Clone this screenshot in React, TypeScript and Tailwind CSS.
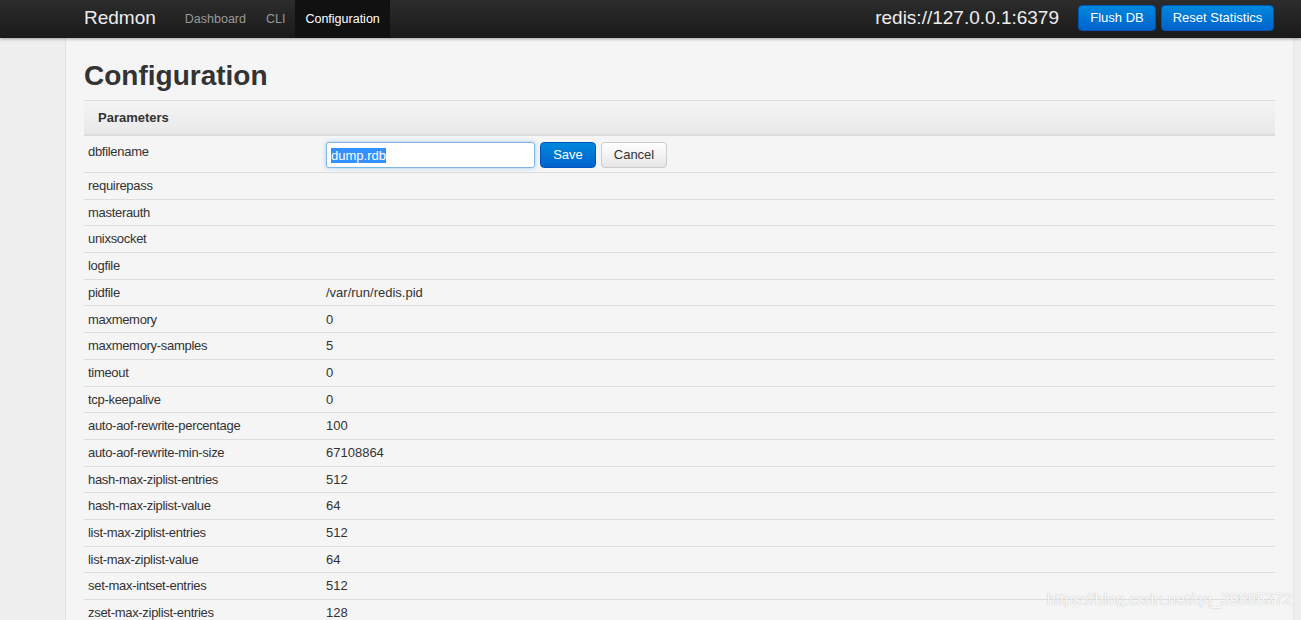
const rows: [string, string][] = [
  ["requirepass", ""],
  ["masterauth", ""],
  ["unixsocket", ""],
  ["logfile", ""],
  ["pidfile", "/var/run/redis.pid"],
  ["maxmemory", "0"],
  ["maxmemory-samples", "5"],
  ["timeout", "0"],
  ["tcp-keepalive", "0"],
  ["auto-aof-rewrite-percentage", "100"],
  ["auto-aof-rewrite-min-size", "67108864"],
  ["hash-max-ziplist-entries", "512"],
  ["hash-max-ziplist-value", "64"],
  ["list-max-ziplist-entries", "512"],
  ["list-max-ziplist-value", "64"],
  ["set-max-intset-entries", "512"],
  ["zset-max-ziplist-entries", "128"],
  ["zset-max-ziplist-value", "64"],
];

function NavBar() {
  return (
    <div className="h-[38px] bg-gradient-to-b from-[#2c2c2c] to-[#1a1a1a] flex items-center shadow-[0_1px_3px_rgba(0,0,0,0.35)] relative z-10">
      <div className="w-[84px]" />
      <div className="text-[19px] text-[#eeeeee] mr-[19px] -mt-[1px]">Redmon</div>
      <div className="flex h-full text-[12.5px]">
        <div className="px-[10px] flex items-center text-[#999999]">Dashboard</div>
        <div className="px-[10px] flex items-center text-[#999999]">CLI</div>
        <div className="px-[10px] flex items-center text-white bg-[#111111]">Configuration</div>
      </div>
      <div className="flex-1" />
      <div className="text-[19px] text-[#eeeeee] mr-[19px] -mt-[1px]">redis://127.0.0.1:6379</div>
      <div className="flex gap-[5px] mr-[27px] -mt-[2px]">
        <button className="h-[26px] w-[78px] rounded-[4px] text-[13px] text-white bg-gradient-to-b from-[#0088dd] to-[#0062cc] border border-[#0055bb]">Flush DB</button>
        <button className="h-[26px] w-[113px] rounded-[4px] text-[13px] text-white bg-gradient-to-b from-[#0088dd] to-[#0062cc] border border-[#0055bb]">Reset Statistics</button>
      </div>
    </div>
  );
}

export default function App() {
  return (
    <div className="w-[1301px] h-[620px] overflow-hidden bg-[#eeeeee] text-[#333333] relative" style={{ fontFamily: '"Liberation Sans", Arial, sans-serif' }}>
      <NavBar />
      <div className="flex">
        <div className="w-[65px] shrink-0" />
        <div className="w-[1229px] bg-[#f5f5f5] border-l border-r border-[#e4e4e4] min-h-[600px] pl-[18px] pr-[18px]">
          <h1 className="text-[28px] font-bold text-[#333333] pt-[21px] h-[62px] leading-[34px]">Configuration</h1>
          <div className="w-[1191px] text-[13px]">
            <div className="h-[36px] flex items-center pl-[14px] font-bold border-t border-[#dddddd] border-b-2 border-b-[#dcdcdc] bg-gradient-to-b from-[#f4f4f4] to-[#e9e9e9]">Parameters</div>
            <div className="h-[37px] flex border-b border-[#dddddd]">
              <div className="w-[242px] pl-[4px] pt-[6px] tracking-[-0.3px]">dbfilename</div>
              <div className="flex items-center gap-[5px] pt-[2px]">
                <div className="h-[26px] w-[209px] bg-white border border-[#7fb4e6] rounded-[3px] shadow-[0_0_4px_rgba(82,168,236,0.5)] flex items-center pl-[4px]">
                  <span className="bg-[#3390ff] text-white leading-[15px]">dump.rdb</span>
                </div>
                <button className="h-[26px] w-[56px] rounded-[4px] text-[13px] text-white bg-gradient-to-b from-[#0088dd] to-[#0062cc] border border-[#0055bb]">Save</button>
                <button className="h-[26px] w-[66px] rounded-[4px] text-[13px] text-[#333333] bg-gradient-to-b from-white to-[#e6e6e6] border border-[#cccccc]">Cancel</button>
              </div>
            </div>
            {rows.map(([k, v]) => (
              <div key={k} className="h-[26.7px] flex items-center border-b border-[#dddddd]">
                <div className="w-[242px] pl-[4px] tracking-[-0.3px]">{k}</div>
                <div>{v}</div>
              </div>
            ))}
          </div>
        </div>
      </div>
      <div className="absolute right-[9px] bottom-[8px] text-[16px] text-[#fafafa]" style={{ textShadow: "0 0 1px rgba(140,140,140,0.7)" }}>https://blog.csdn.net/qq_39885372</div>
    </div>
  );
}
